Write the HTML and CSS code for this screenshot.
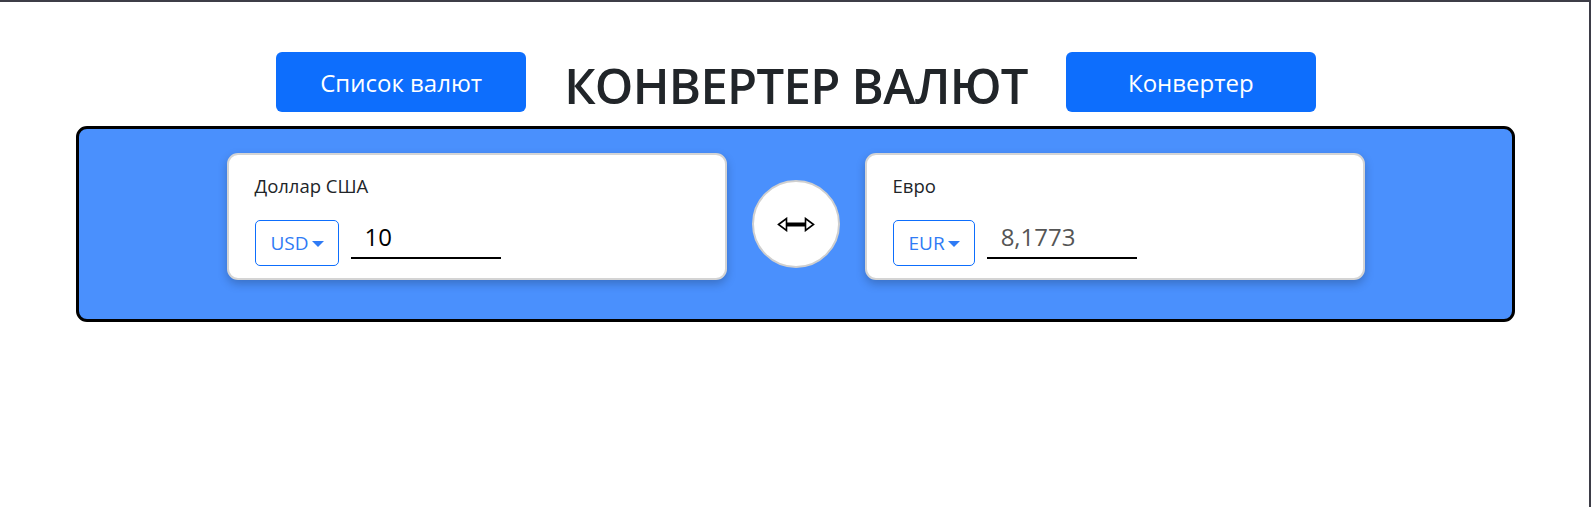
FILE: index.html
```html
<!DOCTYPE html>
<html lang="ru">
<head>
<meta charset="utf-8">
<title>Конвертер валют</title>
<link rel="stylesheet" href="styles.css">
</head>
<body>
<div class="frame">
  <header class="header">
    <button class="nav-btn">Список валют</button>
    <h1 class="title">КОНВЕРТЕР ВАЛЮТ</h1>
    <button class="nav-btn">Конвертер</button>
  </header>
  <main class="panel">
    <section class="card">
      <div class="card-label">Доллар США</div>
      <div class="card-row">
        <button class="select">USD<span class="caret"></span></button>
        <input class="amount" type="text" value="10">
      </div>
    </section>
    <button class="swap" aria-label="Поменять">
      <svg width="38" height="15" viewBox="0 0 38 15">
        <rect x="9" y="5.5" width="20" height="4" fill="#000"/>
        <polygon points="1.5,7.5 9.5,1.5 9.5,13.5" fill="#fff" stroke="#000" stroke-width="1.6" stroke-linejoin="miter"/>
        <polygon points="36.5,7.5 28.5,1.5 28.5,13.5" fill="#fff" stroke="#000" stroke-width="1.6" stroke-linejoin="miter"/>
      </svg>
    </button>
    <section class="card">
      <div class="card-label">Евро</div>
      <div class="card-row">
        <button class="select">EUR<span class="caret"></span></button>
        <input class="amount result" type="text" value="8,1773" readonly>
      </div>
    </section>
  </main>
</div>
</body>
</html>
```
FILE: styles.css
```css
* { box-sizing: border-box; }
html, body { margin: 0; padding: 0; background: #fff; }
body {
  font-family: "Open Sans", "Noto Sans", sans-serif;
  color: #212529;
}
.frame {
  min-height: 100vh;
  border-top: 2px solid #3d3d47;
  border-right: 2px solid #3d3d47;
  padding-top: 50px;
}
.header {
  display: flex;
  justify-content: center;
  align-items: center;
  gap: 38px;
  height: 60px;
  padding-left: 3px;
}
.nav-btn {
  width: 250px;
  height: 60px;
  border: none;
  border-radius: 6px;
  background: #0d6efd;
  color: #fff;
  font-family: inherit;
  font-size: 24px;
  padding: 0;
}
.title {
  margin: 6px 0 0;
  font-size: 49px;
  font-weight: 600;
  line-height: 1;
  letter-spacing: -0.7px;
  color: #212529;
}
.panel {
  margin: 14px 74px 0 76px;
  background: #4a90fd;
  border: 3px solid #000;
  border-radius: 11px;
  padding: 24px 0 39px;
  display: flex;
  justify-content: center;
  align-items: center;
  gap: 25px;
}
.card {
  width: 500px;
  height: 127px;
  background: #fff;
  border: 2px solid #d4d4d4;
  border-radius: 11px;
  box-shadow: 0 4px 10px rgba(0, 0, 0, 0.22);
  padding: 18px 26px 0;
}
.card-label {
  font-size: 18.5px;
  line-height: 26px;
  color: #212529;
}
.card-row {
  margin-top: 20px;
  display: flex;
  align-items: flex-end;
  gap: 12px;
}
.select {
  height: 46px;
  padding: 0 14px 0 15px;
  background: #fff;
  border: 1px solid #0d6efd;
  border-radius: 5px;
  color: #2f7bf5;
  font-family: inherit;
  font-size: 19px;
  display: flex;
  align-items: center;
  gap: 3px;
}
.caret {
  display: inline-block;
  width: 0;
  height: 0;
  border-left: 6px solid transparent;
  border-right: 6px solid transparent;
  border-top: 6px solid #2f7bf5;
  margin-top: 1px;
}
.amount {
  width: 150px;
  height: 40px;
  margin-bottom: 7px;
  border: none;
  border-bottom: 2px solid #000;
  padding: 0 0 3px 14px;
  font-family: inherit;
  font-size: 24px;
  color: #000;
  outline: none;
  background: transparent;
}
.amount.result { color: #555; }
.swap {
  width: 88px;
  height: 88px;
  border-radius: 50%;
  background: #fff;
  border: 2px solid #cfcfcf;
  padding: 0;
  display: flex;
  align-items: center;
  justify-content: center;
  margin-top: 15px;
}
.swap svg { display: block; }
```
